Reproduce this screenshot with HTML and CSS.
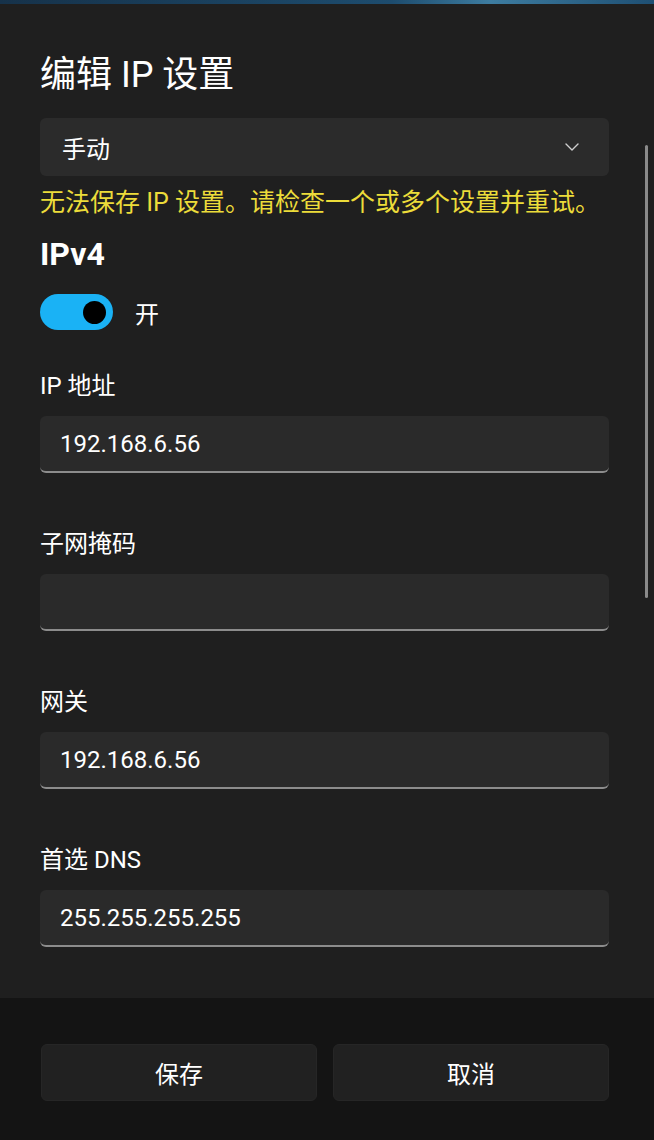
FILE: index.html
```html
<!DOCTYPE html>
<html lang="zh-CN">
<head>
    <meta charset="UTF-8">
    <meta name="viewport" content="width=device-width, initial-scale=1.0">
    <title>编辑 IP 设置</title>
    <link rel="stylesheet" href="styles.css">
</head>
<body>
    <!-- Desktop peeking above the dialog -->
    <div class="desktop-strip"></div>

    <div class="dialog">
        <div class="content">
            <h1 class="title">编辑 IP 设置</h1>

            <div class="select">
                <span>手动</span>
                <svg class="chevron" width="14" height="8" viewBox="0 0 14 8">
                    <path d="M1 1 L7 7 L13 1" fill="none" stroke="#cfcfcf" stroke-width="1.4" stroke-linecap="round" stroke-linejoin="round"/>
                </svg>
            </div>

            <p class="error">无法保存 IP 设置。请检查一个或多个设置并重试。</p>

            <h2 class="section">IPv4</h2>

            <div class="toggle-row">
                <div class="toggle"><span class="knob"></span></div>
                <span>开</span>
            </div>

            <div class="field">
                <label>IP 地址</label>
                <div class="input">192.168.6.56</div>
            </div>

            <div class="field">
                <label>子网掩码</label>
                <div class="input"></div>
            </div>

            <div class="field">
                <label>网关</label>
                <div class="input">192.168.6.56</div>
            </div>

            <div class="field">
                <label>首选 DNS</label>
                <div class="input">255.255.255.255</div>
            </div>

            <!-- Scrollbar thumb -->
            <div class="scrollbar"></div>
        </div>

        <div class="footer">
            <button class="btn">保存</button>
            <button class="btn">取消</button>
        </div>
    </div>
</body>
</html>
```

FILE: styles.css
```css
/* General Styling */
body {
    margin: 0;
    background: #1f1f1f;
    color: #ffffff;
    font-family: Roboto, "Noto Sans CJK SC", sans-serif;
    height: 1140px;
    overflow: hidden;
}

.desktop-strip {
    height: 4px;
    background: linear-gradient(to right, #16324a, #1d4c6e 60%, #3d7ca0 75%, #1e4f73);
}

.dialog {
    height: 1136px;
    display: flex;
    flex-direction: column;
}

.content {
    flex: 1;
    position: relative;
    padding: 49px 45px 0 40px;
}

.title {
    margin: 0 0 21px;
    font-size: 36px;
    font-weight: 400;
    line-height: 44px;
}

.select {
    height: 58px;
    background: #2b2b2b;
    border-radius: 6px;
    display: flex;
    align-items: center;
    justify-content: space-between;
    padding: 0 30px 0 22px;
    font-size: 24px;
}

.error {
    margin: 11px 0 0;
    color: #ecdc3a;
    font-size: 25px;
    line-height: 32px;
    white-space: nowrap;
}

.section {
    margin: 15px 0 0;
    font-size: 32px;
    font-weight: 700;
    line-height: 40px;
}

.toggle-row {
    margin-top: 20px;
    display: flex;
    align-items: center;
    gap: 22px;
    font-size: 24px;
}

.toggle {
    width: 73px;
    height: 36px;
    border-radius: 18px;
    background: #1ab2f5;
    display: flex;
    align-items: center;
    justify-content: flex-end;
    padding-right: 7px;
    box-sizing: border-box;
}

.knob {
    width: 23px;
    height: 23px;
    border-radius: 50%;
    background: #000000;
}

.field {
    margin-top: 40px;
}

.field + .field {
    margin-top: 55px;
}

.field label {
    display: block;
    font-size: 24px;
    line-height: 32px;
    margin-bottom: 14px;
}

.input {
    height: 57px;
    box-sizing: border-box;
    background: #2a2a2a;
    border-radius: 6px;
    border-bottom: 2px solid #8c8c8c;
    padding: 0 20px;
    display: flex;
    align-items: center;
    font-size: 24px;
}

.scrollbar {
    position: absolute;
    top: 141px;
    right: 6px;
    width: 3px;
    height: 453px;
    border-radius: 2px;
    background: #8a8a8a;
}

.footer {
    height: 142px;
    box-sizing: border-box;
    background: #141414;
    padding: 46px 45px 0 41px;
    display: flex;
    gap: 16px;
}

.btn {
    flex: 1;
    height: 57px;
    background: #212121;
    border: 1px solid #262626;
    border-radius: 6px;
    color: #ffffff;
    font-family: Roboto, "Noto Sans CJK SC", sans-serif;
    font-size: 24px;
}
```
